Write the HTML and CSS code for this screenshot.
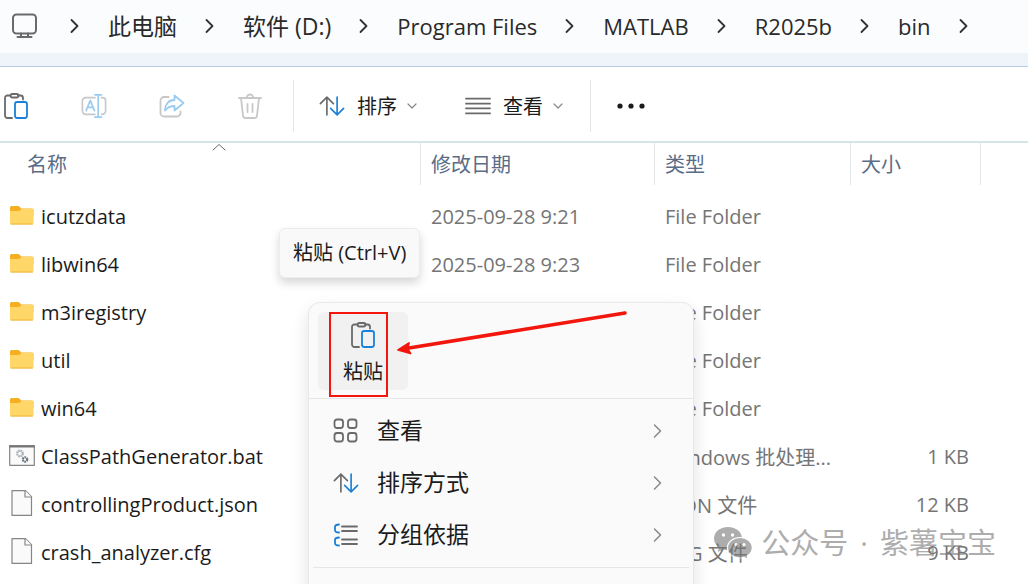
FILE: index.html
```
<!DOCTYPE html>
<html lang="zh">

<head>
    <meta charset="utf-8"/>
    <meta name="viewport" content="width=device-width, initial-scale=1.0">
    <title>bin</title>
    <link rel="stylesheet" href="styles.css">
</head>
<body>
    <!-- shared icons -->
    <svg class="defs" width="0" height="0">
        <symbol id="chevron" viewBox="0 0 10 16"><path d="M1.5 2l6 6-6 6"/></symbol>
        <symbol id="down" viewBox="0 0 10 8"><path d="M1 2l4 4 4-4"/></symbol>
        <symbol id="paste" viewBox="0 0 24 26">
            <path d="M6.500 2.500H3.500a2.500 2.500 0 0 0-2.500 2.500v17.500a2.500 2.500 0 0 0 2.500 2.500H8M14 2.500h2.500a2.500 2.500 0 0 1 2.500 2.500v1.500"/>
            <rect x="6.500" y="1" width="8" height="3.500" rx="1.700"/>
            <rect class="blue" x="11" y="9" width="12" height="16" rx="2.200"/>
        </symbol>
        <symbol id="sort" viewBox="0 0 28 24">
            <path d="M8.500 21.500V2.500M1.500 9.500l7-7 7 7"/>
            <path class="blue" d="M19.500 2.500v19M12.500 14.500l7 7 7-7"/>
        </symbol>
        <symbol id="folder" viewBox="0 0 26 26">
            <path class="folder-back" d="M1 5.500Q1 4 2.500 4h6.500q1 0 1.800 1l1.200 1.500h11q1.500 0 1.500 1.500v6H1z"/>
            <path class="folder-front" d="M1 9h8.500q1 0 1.700-.800L12.500 7H23q1.500 0 1.500 1.500v12.500q0 1.500-1.500 1.500H2.500Q1 22.500 1 21z"/>
            <path class="folder-edge" d="M2 22h21.500"/>
        </symbol>
        <symbol id="file" viewBox="0 0 26 26">
            <path class="sheet" d="M3 .600h13.500l6 6v18.800H3z"/>
            <path class="sheet" d="M16 .600v6.400h6.500"/>
        </symbol>
        <symbol id="bat" viewBox="0 0 26 26">
            <rect class="sheet" x=".700" y="3.700" width="24.600" height="19.600"/>
            <path class="bat-bar" d="M.700 4.500h24.600"/>
            <circle class="gear" cx="11" cy="11.500" r="2.800"/>
            <circle class="gear-dark" cx="16" cy="17.500" r="2.200"/>
        </symbol>
    </svg>

    <div class="window">
        <nav class="path">
            <svg class="pc" viewBox="0 0 28 26"><rect x="3" y="1.500" width="23" height="19" rx="3.500"/><path d="M11 20.500v3M18 20.500v3M7.500 24h14"/></svg>
            <svg class="chevron"><use href="#chevron"/></svg>
            <a href="#">此电脑</a>
            <svg class="chevron"><use href="#chevron"/></svg>
            <a href="#">软件 (D:)</a>
            <svg class="chevron"><use href="#chevron"/></svg>
            <a href="#" class="latin">Program Files</a>
            <svg class="chevron"><use href="#chevron"/></svg>
            <a href="#" class="latin">MATLAB</a>
            <svg class="chevron"><use href="#chevron"/></svg>
            <a href="#" class="latin">R2025b</a>
            <svg class="chevron"><use href="#chevron"/></svg>
            <a href="#" class="latin">bin</a>
            <svg class="chevron"><use href="#chevron"/></svg>
        </nav>

        <div class="toolbar">
            <div class="group actions">
                <button type="button" aria-label="粘贴"><svg class="icon" viewBox="0 0 24 26"><use href="#paste"/></svg></button>
                <button type="button" aria-label="重命名" disabled>
                    <svg class="icon" viewBox="0 0 28 26"><path d="M15 4H5a3.500 3.500 0 0 0-3.500 3.500v11A3.500 3.500 0 0 0 5 22h10M22 4h1a3.500 3.500 0 0 1 3.500 3.500v11A3.500 3.500 0 0 1 23 22h-1"/><path class="blue" d="M18.500 1v24M15 1h7M15 25h7M5.500 18l4.500-11 4.500 11M7 14.500h6"/></svg>
                </button>
                <button type="button" aria-label="共享" disabled>
                    <svg class="icon" viewBox="0 0 26 26"><path d="M9.500 4H5a3.500 3.500 0 0 0-3.500 3.500V20A3.500 3.500 0 0 0 5 23.500h13a3.500 3.500 0 0 0 3.500-3.500v-1.500"/><path class="blue" d="M15.500 2.500l9 7.500-9 7.500v-4.500c-4 0-7 1.500-9.500 4.500 0-6 3.500-10.500 9.500-10.500z"/></svg>
                </button>
                <button type="button" aria-label="删除" disabled>
                    <svg class="icon" viewBox="0 0 24 26"><path d="M1 5h22M8.500 5a3.500 3.500 0 0 1 7 0M3 5l2 17.500a2.500 2.500 0 0 0 2.500 2.500h9a2.500 2.500 0 0 0 2.500-2.500L21 5M9.500 11v8M14.500 11v8"/></svg>
                </button>
            </div>
            <div class="group views">
                <button type="button"><svg class="icon" viewBox="0 0 28 24"><use href="#sort"/></svg>排序<svg class="down"><use href="#down"/></svg></button>
                <button type="button"><svg class="icon" viewBox="0 0 28 24"><path d="M1 4h26M1 9.500h26M1 14.500h26M1 20h26"/></svg>查看<svg class="down"><use href="#down"/></svg></button>
            </div>
            <div class="group more">
                <button type="button" aria-label="更多"><svg class="dots" viewBox="0 0 28 6"><circle cx="3" cy="3" r="2.600"/><circle cx="14" cy="3" r="2.600"/><circle cx="25" cy="3" r="2.600"/></svg></button>
            </div>
        </div>

        <table class="files">
            <colgroup><col class="c-name"><col class="c-date"><col class="c-type"><col class="c-size"><col></colgroup>
            <thead>
                <tr>
                    <th class="name">名称<svg class="asc" viewBox="0 0 14 8"><path d="M1 7l6-5.500L13 7"/></svg></th>
                    <th>修改日期</th><th>类型</th><th>大小</th><td></td>
                </tr>
            </thead>
            <tbody>
                <tr><td class="name"><svg><use href="#folder"/></svg>icutzdata</td><td>2025-09-28 9:21</td><td>File Folder</td><td class="size"></td><td></td></tr>
                <tr><td class="name"><svg><use href="#folder"/></svg>libwin64</td><td>2025-09-28 9:23</td><td>File Folder</td><td class="size"></td><td></td></tr>
                <tr><td class="name"><svg><use href="#folder"/></svg>m3iregistry</td><td></td><td>File Folder</td><td class="size"></td><td></td></tr>
                <tr><td class="name"><svg><use href="#folder"/></svg>util</td><td></td><td>File Folder</td><td class="size"></td><td></td></tr>
                <tr><td class="name"><svg><use href="#folder"/></svg>win64</td><td></td><td>File Folder</td><td class="size"></td><td></td></tr>
                <tr><td class="name"><svg><use href="#bat"/></svg>ClassPathGenerator.bat</td><td></td><td>Windows 批处理...</td><td class="size">1 KB</td><td></td></tr>
                <tr><td class="name"><svg><use href="#file"/></svg>controllingProduct.json</td><td></td><td>JSON 文件</td><td class="size">12 KB</td><td></td></tr>
                <tr><td class="name"><svg><use href="#file"/></svg>crash_analyzer.cfg</td><td></td><td>CFG 文件</td><td class="size">9 KB</td><td></td></tr>
            </tbody>
        </table>

        <div class="tooltip">粘贴 (Ctrl+V)</div>

        <div class="menu">
            <div class="menu-top">
                <button type="button" class="paste"><svg class="icon" viewBox="0 0 24 26"><use href="#paste"/></svg>粘贴</button>
            </div>
            <div class="menu-list">
                <button type="button"><svg class="icon" viewBox="0 0 26 26"><rect x="1.500" y="1.500" width="8.500" height="8.500" rx="2.500"/><rect x="15" y="1.500" width="8.500" height="8.500" rx="2.500"/><rect x="1.500" y="15" width="8.500" height="8.500" rx="2.500"/><rect x="15" y="15" width="8.500" height="8.500" rx="2.500"/></svg><span>查看</span><svg class="chevron"><use href="#chevron"/></svg></button>
                <button type="button"><svg class="icon" viewBox="0 0 28 24"><use href="#sort"/></svg><span>排序方式</span><svg class="chevron"><use href="#chevron"/></svg></button>
                <button type="button"><svg class="icon" viewBox="0 0 26 26"><path d="M9 4.500h15M9 9h15M9 17.500h15M9 22h15"/><path class="blue" d="M6 2.500Q2 2.500 2 5v3q0 2.500 4 2.500M6 15.500q-4 0-4 2.500v3q0 2.500 4 2.500"/></svg><span>分组依据</span><svg class="chevron"><use href="#chevron"/></svg></button>
            </div>
            <div class="menu-rest"></div>
        </div>

        <!-- annotation -->
        <div class="mark"></div>
        <svg class="arrow" viewBox="0 0 232 48"><path class="shaft" d="M228 5L12 40"/><path class="head" d="M1 42l11-7-1.500 5.500 3 5z"/></svg>

        <div class="watermark">
            <svg viewBox="0 0 40 34"><path d="M15 1C7 1 1 6 1 12.500c0 3.700 2 6.800 5 9L4.800 26l5-2.600q2.500.800 5.200.800C23 24.200 29 19 29 12.500S23 1 15 1z"/><path class="front" d="M27 11.500c-7 0-12.500 4.500-12.500 10.200S20 32 27 32q2 0 4-.600l4.500 2.400-1.200-4c3-1.900 5-4.800 5-8.100 0-5.700-5.300-10.200-12.300-10.200z"/><g class="eyes"><circle cx="10.500" cy="9" r="1.700"/><circle cx="19.500" cy="9" r="1.700"/><circle cx="23" cy="18.500" r="1.500"/><circle cx="31" cy="18.500" r="1.500"/></g></svg>
            <div class="account"><span>公众号</span><span>·</span><span>紫薯宝宝</span></div>
        </div>
    </div>
</body>
</html>
```
FILE: styles.css
```
* {
    box-sizing: border-box;
}
body {
    margin: 0;
    font-family: "Open Sans", "Noto Sans CJK SC", sans-serif;
    font-size: 20px;
    color: #1b1b1b;
    background: #fff;
}
.defs {
    position: absolute;
}
.window {
    position: relative;
    height: 100vh;
    overflow: hidden;
}
svg {
    flex: none;
    fill: none;
    stroke: #6a6a6a;
    stroke-width: 1.8;
    stroke-linecap: round;
    stroke-linejoin: round;
}
.blue {
    stroke: #1a80d8;
}
button {
    display: flex;
    align-items: center;
    padding: 0;
    border: none;
    background: none;
    font: inherit;
    color: inherit;
}

/* address bar */
.path {
    display: flex;
    align-items: center;
    gap: 28px;
    height: 67px;
    padding: 0 10px 14px;
    border-bottom: 1px solid #b9cbe0;
    background: linear-gradient(#fafcfe 53px, #eef4fa 53px);
    font-size: 23px;
    line-height: 32px;
    white-space: nowrap;
}
.path a {
    color: #2a2a2a;
    text-decoration: none;
}
.path .latin {
    font-size: 22px;
}
.path .pc {
    width: 28px;
    height: 26px;
    margin-right: 4px;
    stroke-width: 2;
}
.chevron {
    width: 10px;
    height: 16px;
}
.path .chevron {
    stroke: #333;
}

/* toolbar */
.toolbar {
    display: flex;
    align-items: center;
    height: 76px;
    padding-top: 3px;
    border-bottom: 2px solid #d5e4e4;
}
.group {
    display: flex;
    align-items: center;
    height: 52px;
}
.group + .group {
    border-left: 1px solid #e6e6e6;
}
.icon {
    width: 26px;
    height: 26px;
}
.actions {
    gap: 52px;
    padding: 0 30px 0 3px;
}
.actions button:disabled .icon {
    stroke: #c8c8c8;
}
.actions button:disabled .blue {
    stroke: #9ccbf0;
}
.views {
    gap: 48px;
    padding: 0 27px 0 25px;
}
.views button {
    gap: 12px;
}
.down {
    width: 10px;
    height: 8px;
    margin-left: -2px;
    stroke: #888;
    stroke-width: 1.2;
}
.more {
    padding-left: 26px;
}
.dots {
    width: 28px;
    height: 6px;
    fill: #1b1b1b;
    stroke: none;
}

/* file list */
.files {
    width: 100%;
    border-collapse: separate;
    border-spacing: 0;
    table-layout: fixed;
    white-space: nowrap;
}
.c-name {
    width: 421px;
}
.c-date {
    width: 234px;
}
.c-type {
    width: 196px;
}
.c-size {
    width: 130px;
}
.files td {
    height: 48px;
    padding: 0 0 0 10px;
    color: #757575;
}
.files th {
    height: 42px;
    padding: 0 0 2px 10px;
    border-right: 1px solid #e3e7ea;
    font-weight: normal;
    text-align: left;
    color: #5a6c86;
}
.files thead td {
    height: 42px;
}
.files th.name {
    position: relative;
    padding-left: 27px;
}
.asc {
    position: absolute;
    top: 0;
    left: 212px;
    width: 14px;
    height: 8px;
    stroke-width: 1;
}
.files tbody::before {
    content: "";
    display: block;
    height: 7px;
}
.files td.name {
    padding-left: 9px;
    color: #1b1b1b;
}
.name svg:not(.asc) {
    width: 26px;
    height: 26px;
    margin-right: 6px;
    vertical-align: -4px;
}
.files td.size {
    padding: 0 12px 0 0;
    text-align: right;
}
.folder-back {
    fill: #f3b01f;
    stroke: none;
}
.folder-front {
    fill: #ffd768;
    stroke: none;
}
.folder-edge {
    stroke: #eeb63c;
    stroke-width: 1;
}
.sheet {
    fill: #fafafa;
    stroke: #858585;
    stroke-width: 1.2;
}
.bat-bar {
    stroke: #777;
    stroke-width: 2;
}
.gear,
.gear-dark {
    stroke: #a5adb3;
    stroke-width: 2.2;
    stroke-linecap: butt;
    stroke-dasharray: 1.6 .6;
}
.gear-dark {
    stroke: #6d7479;
}

.tooltip {
    position: absolute;
    top: 228px;
    left: 279px;
    padding: 10px 13px;
    border: 1px solid #ececec;
    border-radius: 6px;
    background: #f9f9f9;
    box-shadow: 0 5px 10px rgba(0, 0, 0, 0.16);
    line-height: 28px;
    white-space: nowrap;
}

/* context menu */
.menu {
    position: absolute;
    top: 302px;
    left: 308px;
    width: 386px;
    border: 1px solid #e8e8e8;
    border-radius: 12px;
    background: #fafafa;
    box-shadow: 0 8px 18px rgba(0, 0, 0, 0.12);
}
.menu-top {
    padding: 9px 9px 8px;
    border-bottom: 1px solid #e6e6e6;
}
.paste {
    flex-direction: column;
    gap: 10px;
    width: 90px;
    height: 78px;
    padding-top: 10px;
    border-radius: 6px;
    background: #f1f1f1;
    line-height: 28px;
}
.menu-list {
    padding: 6px 0;
    margin: 0 4px;
    border-bottom: 1px solid #e6e6e6;
}
.menu-list button {
    gap: 18px;
    width: 100%;
    height: 52px;
    padding: 0 26px 0 20px;
    font-size: 23px;
}
.menu-list span {
    flex: 1;
    padding-bottom: 4px;
    text-align: left;
}
.menu-list .chevron {
    stroke: #888;
    stroke-width: 1.5;
}
.menu-rest {
    height: 52px;
}

.mark {
    position: absolute;
    top: 312px;
    left: 329px;
    width: 59px;
    height: 85px;
    border: 2px solid #f2160c;
}
.arrow {
    position: absolute;
    top: 308px;
    left: 397px;
    width: 232px;
    height: 48px;
}
.arrow .shaft {
    stroke: #f2160c;
    stroke-width: 3.5;
}
.arrow .head {
    fill: #f2160c;
    stroke: #f2160c;
}

.watermark {
    position: absolute;
    right: 32px;
    bottom: 20px;
    display: flex;
    align-items: center;
    gap: 8px;
    font-size: 29px;
    line-height: 42px;
    color: #777;
    opacity: 0.6;
    white-space: nowrap;
}
.account {
    display: flex;
    gap: 12px;
}
.watermark svg {
    width: 40px;
    height: 34px;
    fill: #777;
    stroke: none;
}
.watermark .front {
    stroke: #fff;
    stroke-width: 1.2;
}
.watermark .eyes {
    fill: #fff;
}
```
